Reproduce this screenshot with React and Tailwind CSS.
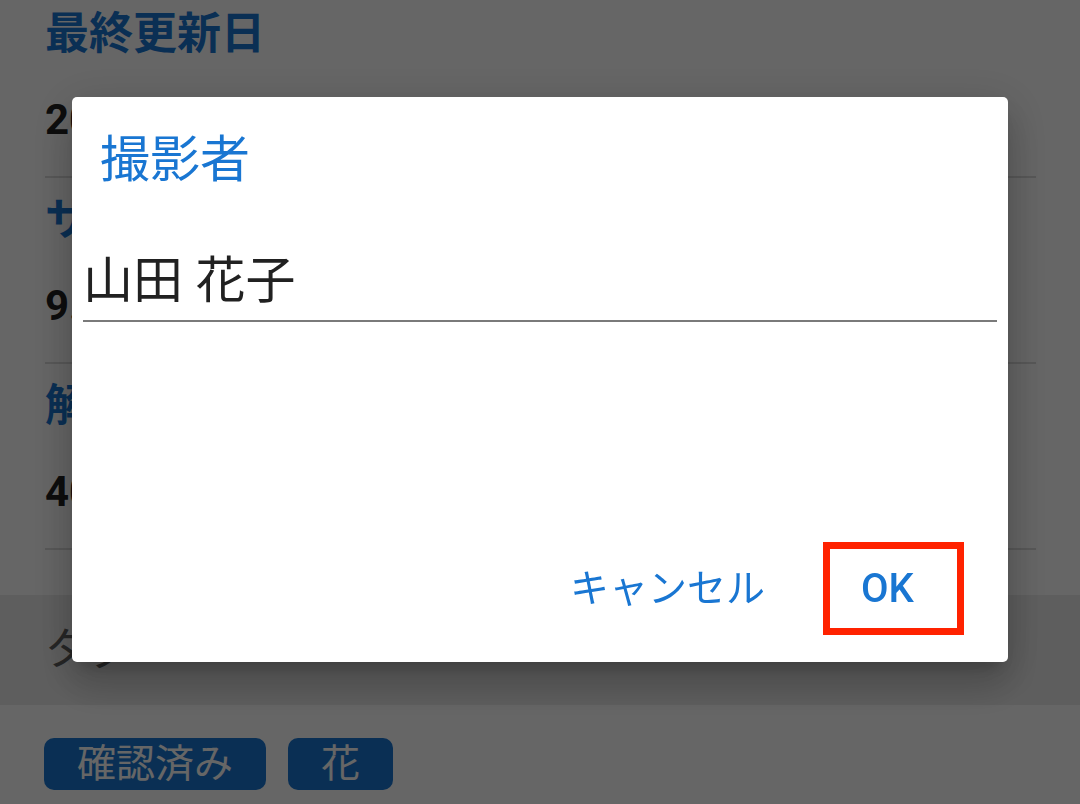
import React from 'react';

const rows = [
  { label: '最終更新日', value: '2024/04/12' },
  { label: 'サイズ', value: '9.8 MB' },
  { label: '解像度', value: '4032 × 3024' },
];

const tags = ['確認済み', '花'];

const PhotoDetails = () => (
  <div className="min-h-screen bg-white overflow-hidden font-['Roboto','Noto_Sans_CJK_JP',sans-serif]">
    <div className="-mt-2 pl-[45px] pr-[44px]">
      {rows.map((row) => (
        <div key={row.label} className="pt-[14px] pb-[28px] border-b-2 border-[#dcdcdc]">
          <div className="text-[44px] leading-[56px] font-bold text-[#1976d2]">{row.label}</div>
          <div className="mt-[30px] text-[42px] leading-[56px] font-bold text-[#212121]">{row.value}</div>
        </div>
      ))}
    </div>

    {/* タグ */}
    <div className="mt-[45px] h-[110px] bg-[#ececec] flex items-center pl-[45px]">
      <span className="text-[44px] text-[#5f5f5f]">タグ</span>
    </div>
    <div className="mt-[33px] pl-[44px] flex gap-[22px]">
      {tags.map((tag) => (
        <span
          key={tag}
          className="h-[52px] px-[33px] rounded-[10px] bg-[#1976d2] text-white text-[39px] leading-[52px]"
        >
          {tag}
        </span>
      ))}
    </div>
  </div>
);

const EditDialog = () => (
  <div className="fixed inset-0 bg-black/60 flex justify-center items-start pt-[97px] font-['Roboto','Noto_Sans_CJK_JP',sans-serif]">
    <div className="w-[936px] h-[565px] bg-white rounded-[5px] flex flex-col shadow-[0_11px_15px_-7px_rgba(0,0,0,0.2),0_24px_38px_3px_rgba(0,0,0,0.14),0_9px_46px_8px_rgba(0,0,0,0.12)]">
      <div className="pt-[33px] pl-[28px] text-[50px] leading-[60px] text-[#1976d2]">撮影者</div>
      <div className="mx-[11px] mt-[61px] pb-[9px] border-b-2 border-[#7a7a7a]">
        <input
          readOnly
          defaultValue="山田 花子"
          className="w-full h-[60px] pl-0 bg-transparent outline-none text-[50px] leading-[60px] text-[#212121]"
        />
      </div>
      <div className="flex-1" />
      <div className="flex justify-end items-center pr-[44px] pb-[27px]">
        <button className="mr-[58px] text-[39px] leading-[48px] text-[#1976d2]">キャンセル</button>
        <button className="w-[141px] h-[93px] border-[7px] border-[#ff2200] pl-[31px] flex items-center text-[40px] leading-[48px] font-medium text-[#1976d2]">
          OK
        </button>
      </div>
    </div>
  </div>
);

export default function App() {
  return (
    <div className="relative">
      <PhotoDetails />
      <EditDialog />
    </div>
  );
}
